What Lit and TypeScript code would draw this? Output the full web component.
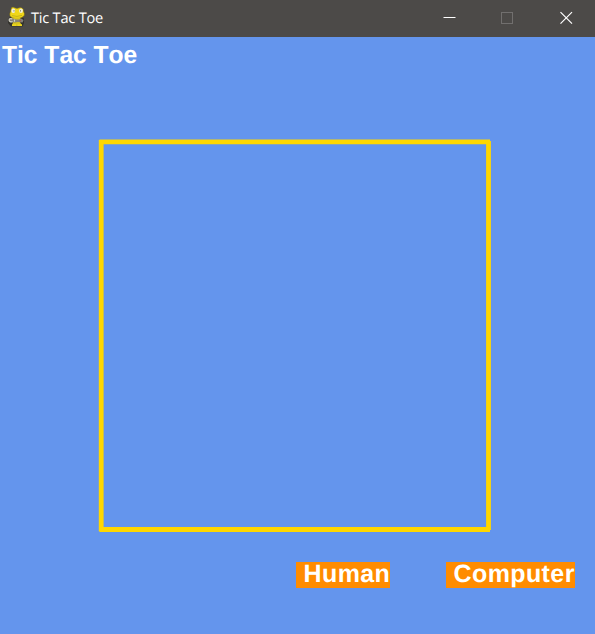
import { LitElement, html, css } from "lit";
import { customElement } from "lit/decorators.js";

@customElement("title-bar")
class TitleBar extends LitElement {
  static styles = css`
    :host { display: flex; height: 37px; box-sizing: border-box; background: #4c4a48; color: #fff; }
    .icon { display: block; margin: 6px 0 0 7px; flex: none; }
    .name { flex: 1; margin-left: 5px; font: 14.6px/36px "Open Sans", "Noto Sans", sans-serif; letter-spacing: -0.22px; white-space: nowrap; text-rendering: geometricPrecision; }
    .control { width: 58.5px; height: 37px; flex: none; display: block; }
  `;
  render() {
    return html`
      <svg class="icon" width="19" height="22" viewBox="0 0 19 22">
        <path d="M2 12 L5 10 H14 L17 12.5 L17 17 L15.5 20.5 H4 L1 17Z" fill="#33322c"/>
        <path d="M4.5 1.5 Q6 .6 8 1.8 Q10 2.8 12 1.8 Q14.5 .8 16.2 3 L16.8 6 Q18 7.5 17.3 9.5 Q15.5 11.8 12 12.5 L8 12.5 Q4 12 2.8 9.5 Q2.4 7.5 3.3 6Z" fill="#f0d719" stroke="#6a601f" stroke-width=".6"/>
        <path d="M5 11.5 H13 L14 14 L13 16 L15 20 H5 L6 16Z" fill="#d9c41c"/>
        <ellipse cx="6.3" cy="4.8" rx="1.9" ry="2.2" fill="#efeede"/>
        <ellipse cx="14" cy="4.8" rx="1.9" ry="2.2" fill="#efeede"/>
        <path d="M7 4v1.6M13.5 4v1.6" stroke="#8a876c" stroke-width=".9"/>
        <path d="M5 9.6 Q10 11.3 15 9.4" fill="none" stroke="#b3a319" stroke-width=".7"/>
        <path d="M2 12.5 H6 L9 13.5 H12 L14 12.5 L16.5 14 L15.5 16.5 L11 16 L8 16.5 L3 16Z" fill="#858379"/>
        <path d="M5.2 12.8 Q2 12 2.2 14.4 Q2.4 16.3 5.6 15.6M7.5 13.5v2.3" fill="none" stroke="#d2d1c5" stroke-width="1.2"/>
        <path d="M12.5 14.8h1.6" stroke="#a54e3d" stroke-width="1"/>
        <path d="M5 19.2 H9M10.5 19.2 H15" stroke="#ecd61e" stroke-width="1.7"/>
      </svg>
      <div class="name">Tic Tac Toe</div>
      <svg class="control" viewBox="0 0 58.5 37"><path d="M23.5 17.5h12" stroke="#fff"/></svg>
      <svg class="control" viewBox="0 0 58.5 37"><rect x="23.5" y="12.5" width="11" height="11" fill="none" stroke="#716f6e"/></svg>
      <svg class="control" viewBox="0 0 58.5 37"><path d="M23.5 12.2l11.5 11.5M35 12.2l-11.5 11.5" stroke="#fff" stroke-width="1.2"/></svg>
    `;
  }
}

@customElement("app-root")
class AppRoot extends LitElement {
  static styles = css`
    :host {
      display: flex; flex-direction: column; width: 595px; height: 634px; overflow: hidden;
      background: #6495ed; color: #fff;
      font-family: "Liberation Sans", Arial, sans-serif; font-weight: 700; font-kerning: none;
      text-rendering: geometricPrecision;
    }
    .heading { margin: 0; height: 101px; padding: 5px 0 0 2px; box-sizing: border-box; font-size: 24.6px; line-height: 28px; white-space: nowrap; }
    .board { display: block; flex: none; width: 395px; height: 396px; margin-left: 98px; }
    .players { display: flex; gap: 56px; margin: 28px 0 0 296px; }
    .player {
      display: flex; align-items: flex-start;
      box-sizing: border-box; height: 26px; width: 94px; padding: 0 0 0 7.5px; border: 0;
      background: #ff8c00; color: #fff; font: inherit; font-size: 25px; line-height: 24px;
      letter-spacing: 0.4px; text-align: left; white-space: nowrap; text-rendering: inherit;
    }
    .wide { width: 129px; }
  `;
  render() {
    return html`
      <title-bar></title-bar>
      <h1 class="heading">Tic Tac Toe</h1>
      <svg class="board" viewBox="98 138 395 396">
        <path d="M101.2 140V531.3M488.5 141V530M99.5 141.9H490M99.5 529.5H490" fill="none" stroke="#ffd700" stroke-width="4.8"/>
      </svg>
      <div class="players">
        <button class="player">Human</button>
        <button class="player wide">Computer</button>
      </div>
    `;
  }
}
